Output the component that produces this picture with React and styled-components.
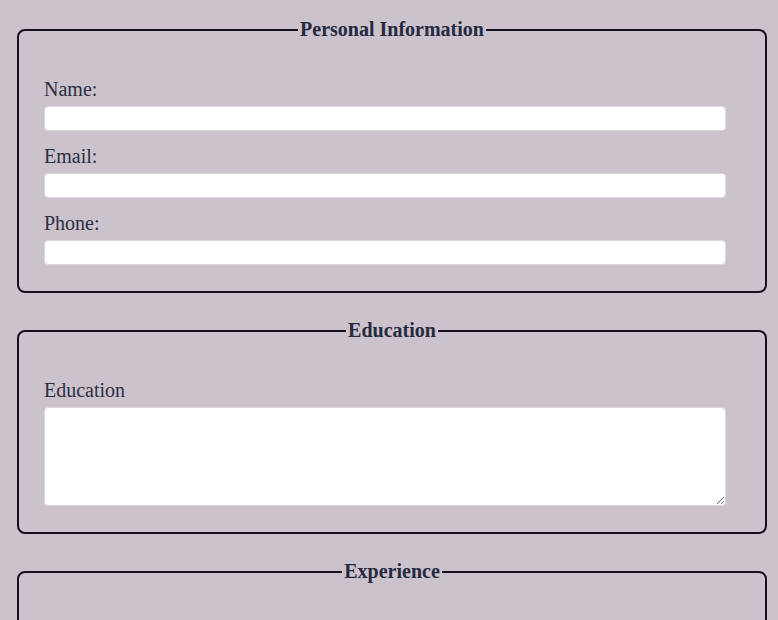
import React from "react";
import styled, { createGlobalStyle } from "styled-components";

const Global = createGlobalStyle`
  html, body { margin: 0; padding: 0; }
  body {
    background: #cbc2cb;
    font-family: "Liberation Serif", "Times New Roman", serif;
    color: #2d2f44;
  }
`;

const Page = styled.form`
  display: flex;
  flex-direction: column;
  gap: 26px;
  padding: 18px 11px 20px 17px;
`;

const Section = styled.fieldset`
  margin: 0;
  border: 2px solid #15111c;
  border-radius: 8px;
  padding: 37px 25px 26px 25px;
  min-width: 0;
`;

const Body = styled.div`
  display: flex;
  flex-direction: column;
  padding-right: 14px;
`;

const Legend = styled.legend`
  margin: 0 auto;
  padding: 0 2px;
  font-size: 20px;
  font-weight: bold;
  color: #262a40;
`;

const Label = styled.label`
  display: block;
  font-size: 20px;
  line-height: 23px;
  margin-bottom: 5px;
`;

const Input = styled.input`
  box-sizing: border-box;
  width: 100%;
  height: 25px;
  margin: 0 0 ${(p) => (p.$last ? 0 : 14)}px 0;
  border: 1px solid #dcd6dc;
  border-radius: 4px;
  background: #fff;
  font: 16px "Liberation Serif", serif;
  padding: 2px 6px;
`;

const Area = styled.textarea`
  box-sizing: border-box;
  width: 100%;
  height: 99px;
  margin: 0;
  border: 1px solid #dcd6dc;
  border-radius: 4px;
  background: #fff;
  font: 16px "Liberation Serif", serif;
  padding: 4px 6px;
  display: block;
`;

export default function App() {
  return (
    <>
      <Global />
      <Page onSubmit={(e) => e.preventDefault()}>
        <Section>
          <Legend>Personal Information</Legend>
          <Body>
            <Label htmlFor="name">Name:</Label>
            <Input id="name" type="text" />
            <Label htmlFor="email">Email:</Label>
            <Input id="email" type="email" />
            <Label htmlFor="phone">Phone:</Label>
            <Input id="phone" type="tel" $last />
          </Body>
        </Section>
        <Section>
          <Legend>Education</Legend>
          <Body>
            <Label htmlFor="edu">Education</Label>
            <Area id="edu" />
          </Body>
        </Section>
        <Section>
          <Legend>Experience</Legend>
          <Body>
            <Label htmlFor="exp">Experience</Label>
            <Area id="exp" />
          </Body>
        </Section>
      </Page>
    </>
  );
}
